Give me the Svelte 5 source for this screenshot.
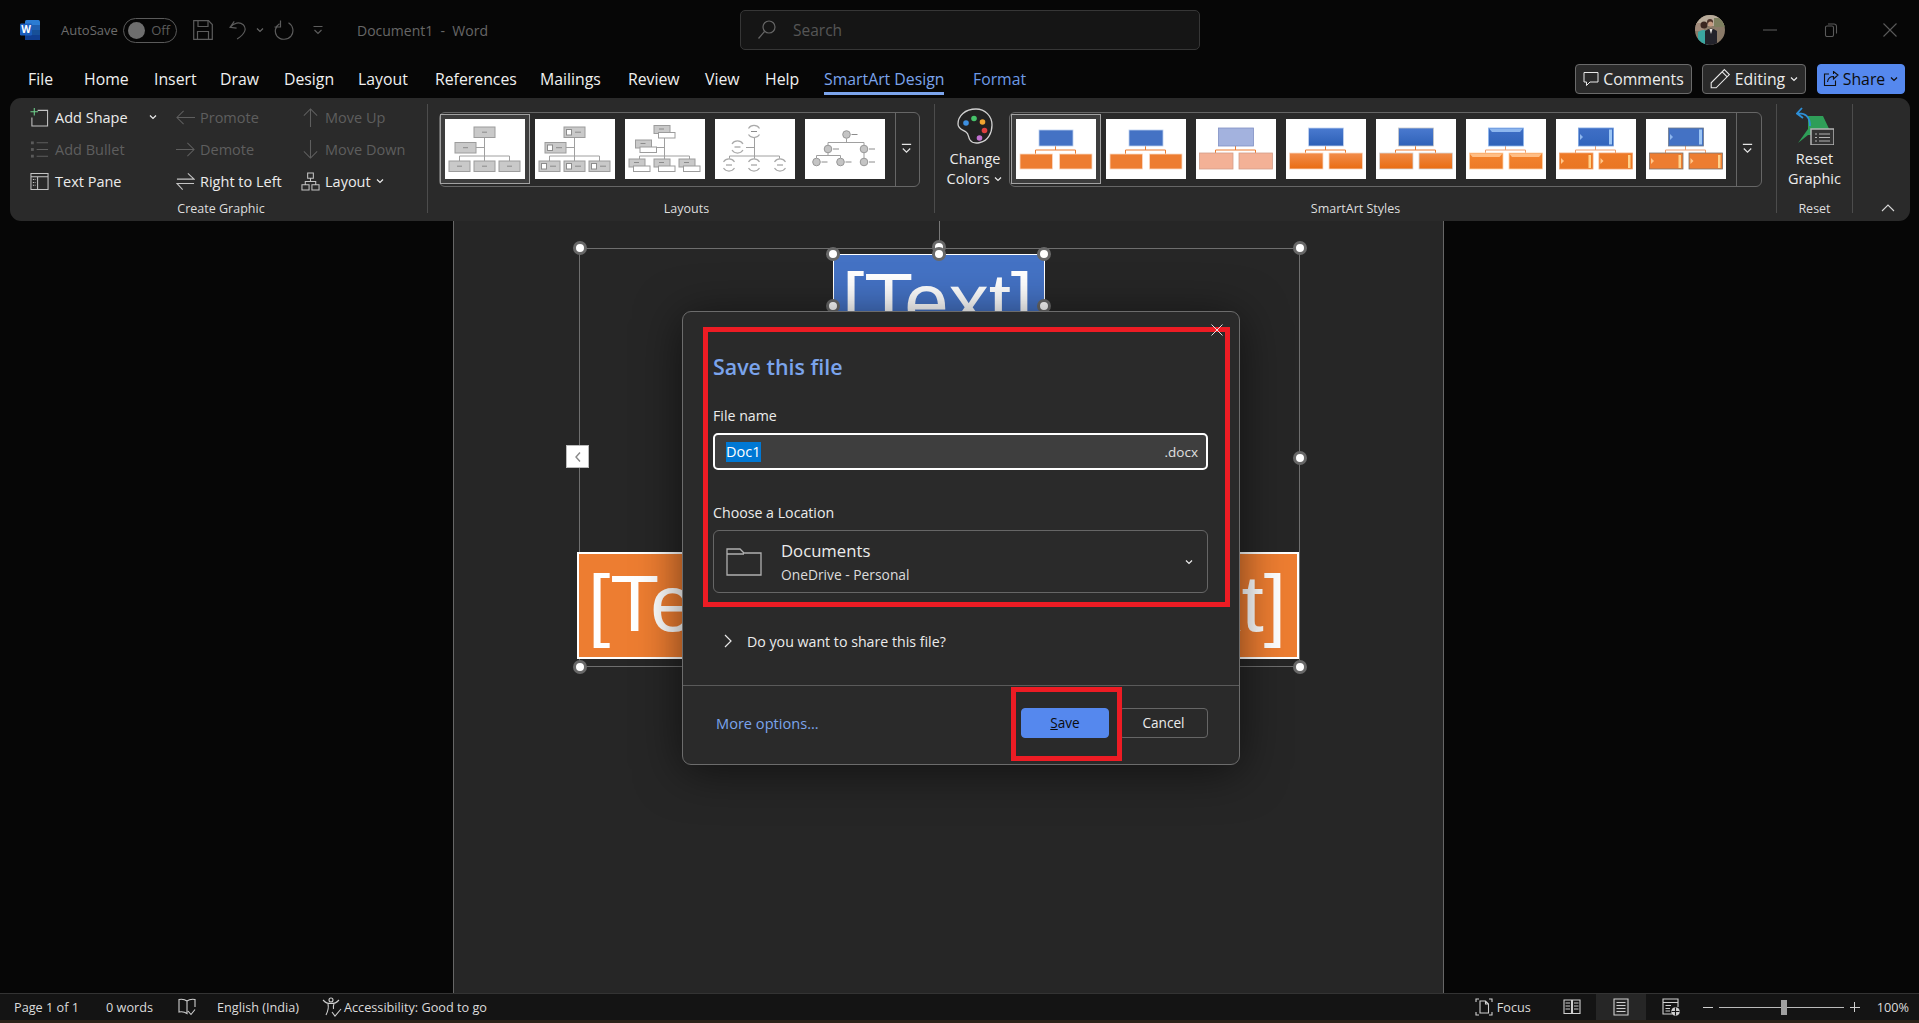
<script>
	const tabs = [
		{ label: 'File', w: 56 },
		{ label: 'Home', w: 70 },
		{ label: 'Insert', w: 66 },
		{ label: 'Draw', w: 64 },
		{ label: 'Design', w: 74 },
		{ label: 'Layout', w: 77 },
		{ label: 'References', w: 105 },
		{ label: 'Mailings', w: 88 },
		{ label: 'Review', w: 77 },
		{ label: 'View', w: 60 },
		{ label: 'Help', w: 59 },
		{ label: 'SmartArt Design', w: 149, active: true },
		{ label: 'Format', w: 70, accent: true }
	];

	// page starts at 453,221 in the window
	const handles = [
		[580, 248], [1300, 248], [580, 667], [1300, 667], [1300, 458],
		[939, 247], [833, 254], [939, 254], [1044, 254], [833, 306], [1044, 306]
	].map(([x, y]) => ({ x: x - 453, y: y - 221 }));

	const orgLines = 'M39.5 18V42M31 28.5H39.5M14.5 42V37H64.5V42';
	const orgBoxes = [
		[29, 8], [10, 23.5], [4, 42], [29, 42], [54, 42]
	];
	const stackBoxes = [
		[29, 6.5], [10.5, 21], [4, 40], [29, 40], [54, 40]
	];
	const rings = [
		[39, 12.5], [22.5, 28], [14, 46], [39, 46], [65, 46]
	];
	const nodes = [
		[41.5, 15.5], [23, 30], [59, 30], [11.5, 43], [35.5, 43], [59, 43]
	];

	const styles = [
		{ top: '#4472c4', low: '#ed7d31', edge: '#bcd0f0', lowEdge: '#fbd9c2', line: '#ed7d31' },
		{ top: '#4472c4', low: '#ed7d31', edge: '#bcd0f0', lowEdge: '#fbd9c2', line: '#ed7d31' },
		{ top: '#a3b2de', low: '#f3b196', edge: '#8090c4', lowEdge: '#d29f8a', line: '#ed7d31', big: true },
		{ top: '#4a7ad0', top2: '#2c5fb6', low: '#f28d4c', low2: '#e96c12', edge: '#c4d4f0', lowEdge: '#fbd9c2', line: '#ed7d31', big: true },
		{ top: '#4a7ad0', top2: '#2f62b8', low: '#f08a45', low2: '#e96c12', edge: '#c9c9c9', lowEdge: '#d6d6d6', line: '#ed7d31', big: true },
		{ top: '#3f6fc6', top2: '#2f62b8', low: '#f4842e', low2: '#ec7a26', edge: '#8db6ee', lowEdge: '#ffd3a6', line: '#f0a070', big: true, cap: true },
		{ top: '#3f6fc6', top2: '#3265bc', low: '#ee7a28', low2: '#e97622', edge: '#7aa2de', lowEdge: '#f2a36e', line: '#f0a070', big: true, side: true },
		{ top: '#4472c4', low: '#ed7d31', edge: '#6f7a8c', lowEdge: '#7d7570', line: '#f0a070', big: true, side: true }
	];
</script>

{#snippet dash(x, y, w = 6)}
	<path d={`M${x} ${y}h${w}`} stroke="#8c8c8c" stroke-width="1" />
{/snippet}

{#snippet layoutThumb(kind)}
	<svg viewBox="0 0 80 60" class="thumb-art">
		<g fill="none" stroke="#a0a0a0" stroke-width="1">
			{#if kind === 5}
				<path d="M41.5 19.5V23.5M23 26V23.5H59V26M23 34V36.5M11.5 39V36.5H35.5V39M59 34V39" />
			{:else}
				<path d={orgLines} />
			{/if}
		</g>
		{#if kind === 1 || kind === 2}
			{#each orgBoxes as [x, y]}
				<rect {x} {y} width="21" height="10.5" fill="#c9c9c9" stroke="#9c9c9c" />
				{#if kind === 2}
					<rect x={x + 2.5} y={y + 2.5} width="5" height="5.5" fill="#fff" stroke="#8c8c8c" />
					{@render dash(x + 11, y + 5.2, 6)}
				{:else}
					{@render dash(x + 8, y + 5.2, 5)}
				{/if}
			{/each}
		{:else if kind === 3}
			{#each stackBoxes as [x, y]}
				<rect {x} {y} width="16" height="8" fill="#c9c9c9" stroke="#9c9c9c" />
				{@render dash(x + 5, y + 3.5, 5)}
				<rect x={x + 4.5} y={y + 7} width="16.5" height="5.5" fill="#fff" stroke="#9c9c9c" />
			{/each}
		{:else if kind === 4}
			{#each rings as [x, y]}
				<circle cx={x} cy={y} r="6.5" fill="#fff" stroke="none" />
				<path d={`M${x - 5.5} ${y - 3}a6.5 6.5 0 0 1 11 0M${x - 5.5} ${y + 3}a6.5 6.5 0 0 0 11 0`} fill="none" stroke="#aaa" stroke-width="1.2" />
				{@render dash(x - 3, y, 6)}
			{/each}
		{:else}
			{#each nodes as [x, y]}
				<circle cx={x} cy={y} r="3.8" fill="#c4c4c4" stroke="#979797" />
				{@render dash(x + 5, y, 6)}
			{/each}
		{/if}
	</svg>
{/snippet}

{#snippet styleThumb(s, i)}
	{@const grow = s.big ? 1 : 0}
	<svg viewBox="0 0 80 60" class="thumb-art">
		<defs>
			<linearGradient id={`t${i}`} x1="0" y1="0" x2="0" y2="1">
				<stop offset="0" stop-color={s.top} />
				<stop offset="1" stop-color={s.top2 || s.top} />
			</linearGradient>
			<linearGradient id={`l${i}`} x1="0" y1="0" x2="0" y2="1">
				<stop offset="0" stop-color={s.low} />
				<stop offset="1" stop-color={s.low2 || s.low} />
			</linearGradient>
		</defs>
		<path
			d={`M39.5 ${27}V31M${19.5} ${35 - grow}V31H59.5V${35 - grow}`}
			fill="none"
			stroke={s.line}
			stroke-width="1"
		/>
		<rect x={23 - grow * 0.5} y={11 - grow * 2} width={34 + grow} height={16 + grow * 2} fill={`url(#t${i})`} stroke={s.edge} stroke-width="0.8" />
		{#each [4, 43.5] as x}
			<rect x={x - grow * 0.5} y={35 - grow} width={32.5 + grow} height={15 + grow} fill={`url(#l${i})`} stroke={s.lowEdge} stroke-width="0.8" />
			{#if s.cap}
				<path d={`M${x - 0.5} 34.5h33l-3 3.5h-27z`} fill="#ffbe85" />
			{/if}
			{#if s.side}
				<rect x={x + 28.5} y="36" width="2.5" height="13" fill="#ffd28a" />
				<path d={`M${x + 1} 39l3 3-3 3z`} fill="#ffc78a" />
			{/if}
		{/each}
		{#if s.cap}
			<path d="M23 9.5h34l-3 3.500h-28z" fill="#8db6ee" />
		{/if}
		{#if s.side}
			<rect x="53" y="10.5" width="3" height="15" fill="#9cc6f5" />
			<path d="M24 15l3 3-3 3z" fill="#8db6ee" />
		{/if}
	</svg>
{/snippet}

{#snippet moreChevron()}
	<svg viewBox="0 0 14 14" class="more"><path d="M2 2.5h10M3 7l4 4 4-4" fill="none" stroke="#e6e6e6" stroke-width="1.2" /></svg>
{/snippet}

{#snippet chevron(cls = 'chev')}
	<svg viewBox="0 0 10 10" class={cls}><path d="M2 3.5l3 3 3-3" fill="none" stroke="currentColor" stroke-width="1.2" /></svg>
{/snippet}

<div class="window">
	<header class="titlebar">
		<div class="title-left">
			<svg viewBox="0 0 20 20" class="word-logo">
				<rect x="5" y="0" width="15" height="20" rx="1.5" fill="#2b7cd3" />
				<rect x="12" y="5" width="8" height="5" fill="#1f5fb0" />
				<rect x="12" y="10" width="8" height="5" fill="#175098" />
				<rect x="5" y="15" width="15" height="5" fill="#103f91" />
				<rect x="0" y="3.5" width="12" height="12" rx="1.2" fill="#1b5ebe" />
				<text x="6" y="13" text-anchor="middle" class="word-w">W</text>
			</svg>
			<span class="autosave">AutoSave</span>
			<span class="toggle"><i></i><span>Off</span></span>
			<svg viewBox="0 0 20 20" class="qat save-ic">
				<path d="M.7 .7H15.500L19.300 4.500V19.300H.7Z" fill="none" />
				<path d="M5 .7V6.500H15V.7M4.500 19.300V11.500H15.500V19.300" fill="none" />
			</svg>
			<svg viewBox="0 0 20 20" class="qat undo-ic">
				<path d="M5.500 1L1 7.200 8 8M1.500 7C5 2.500 11 1 15 4.500 19 8.500 17 14 8.500 19.500" fill="none" />
			</svg>
			<span class="qat-chev">{@render chevron()}</span>
			<svg viewBox="0 0 20 20" class="qat redo-ic">
				<path d="M6.500 .5V7H.5M5.500 3.800C1 6.500 .2 12 2.800 15.800 6 20.200 13.500 20.500 17 16.200 20.500 11.500 19 5.500 14.500 2.800" fill="none" />
			</svg>
			<svg viewBox="0 0 12 12" class="qat custom-ic">
				<path d="M1.500 2.500h9M2.500 6l3.500 3.500L9.500 6" fill="none" />
			</svg>
			<span class="doc-title">Document1&nbsp; -&nbsp; Word</span>
		</div>
		<div class="searchbox">
			<svg viewBox="0 0 18 20" class="search-ic">
				<circle cx="11" cy="7" r="6" fill="none" />
				<path d="M6.500 11.500L.5 18.500" fill="none" />
			</svg>
			<span>Search</span>
		</div>
		<div class="title-right">
			<svg viewBox="0 0 30 30" class="avatar">
				<defs>
					<clipPath id="av"><circle cx="15" cy="15" r="15" /></clipPath>
				</defs>
				<g clip-path="url(#av)">
					<rect width="30" height="30" fill="#8a7a68" />
					<rect width="30" height="11" fill="#b8ab9a" />
					<rect x="0" y="8" width="9" height="8" fill="#a08a7a" />
					<rect x="19" y="3" width="12" height="9" fill="#7d7f5f" />
					<circle cx="9" cy="10" r="3.500" fill="#3a2620" />
					<path d="M3 30V17q6-4 10 0v13z" fill="#3aa6a0" />
					<circle cx="15" cy="7" r="3" fill="#4a3028" />
					<circle cx="15.500" cy="9" r="2.500" fill="#c49a80" />
					<path d="M10 30V16q6-5 12 0v14z" fill="#23232b" />
					<path d="M14.500 14l1.500 5 1.500-5z" fill="#e8e4e0" />
				</g>
			</svg>
			<span class="win-btn"><svg viewBox="0 0 14 14" class="win-ic"><path d="M0 7h14" /></svg></span>
			<span class="win-btn"><svg viewBox="0 0 14 14" class="win-ic"><path d="M1.500 4.500a1.500 1.500 0 0 1 1.500-1.500h5a1.500 1.500 0 0 1 1.500 1.500v7.500a1.500 1.500 0 0 1-1.500 1.500h-5a1.500 1.500 0 0 1-1.500-1.500zM4 1h6a2.500 2.500 0 0 1 2.500 2.500v7" /></svg></span>
			<span class="win-btn"><svg viewBox="0 0 14 14" class="win-ic"><path d="M.5 .5l13 13M13.500 .5l-13 13" /></svg></span>
		</div>
	</header>

	<div class="tabrow">
		<nav class="tabs">
			{#each tabs as tab}
				<span class="tab-cell" style={`width:${tab.w}px`}>
					<span class="tab" class:active={tab.active} class:accent={tab.accent}>{tab.label}</span>
				</span>
			{/each}
		</nav>
		<div class="actions">
			<button class="pill comments">
				<svg viewBox="0 0 16 16" class="pill-ic"><path d="M1 1.500H15V11H7L3.500 14.500V11H1Z" fill="none" stroke="#e8e8e8" /></svg>
				Comments
			</button>
			<button class="pill editing">
				<svg viewBox="0 0 20 20" class="pill-ic big"><path d="M14 1.500l4.500 4.500L6.500 18H2v-4.500zM12 3.500l4.500 4.500" fill="none" stroke="#e8e8e8" /></svg>
				Editing {@render chevron()}
			</button>
			<button class="pill share">
				<svg viewBox="0 0 16 16" class="pill-ic"><path d="M6 3H1.500V14.500H12.500V9.500M4.500 11C5 7.500 7 5.500 10.500 5.500V8L15 4 10.500 .5V3" fill="none" stroke="#111" stroke-width="1.100" /></svg>
				Share {@render chevron()}
			</button>
		</div>
	</div>

	<section class="ribbon">
		<div class="group create">
			<div class="cmds">
				<div class="cmd"><svg viewBox="0 0 20 20" class="ic shift"><path d="M8 2.500H18.500V19H2V10" fill="none" /><path d="M4.500 0V8M.5 4H8.500" fill="none" stroke="#6fd08c" /></svg><span>Add Shape</span>{@render chevron('chev add-chev')}</div>
				<div class="cmd off"><svg viewBox="0 0 20 20" class="ic dim shift"><path d="M7 3h12M7 10h12M7 17h12" fill="none" /><rect x="1" y="1.500" width="3" height="3" fill="#5a5a5a" stroke="none" /><rect x="1" y="8.500" width="3" height="3" fill="#5a5a5a" stroke="none" /><rect x="1" y="15.500" width="3" height="3" fill="#5a5a5a" stroke="none" /></svg><span>Add Bullet</span></div>
				<div class="cmd"><svg viewBox="0 0 20 20" class="ic shift"><path d="M1 1.500H19V18.500H1ZM1 5H19M8 5V18.500" fill="none" /><path d="M3 8h3M3 11h3M3 14h3" fill="none" stroke-dasharray="1.500 1" /></svg><span>Text Pane</span></div>
			</div>
			<div class="cmds">
				<div class="cmd off"><svg viewBox="0 0 20 20" class="ic dim"><path d="M20 10H1M8 3L1 10 8 17" fill="none" /></svg><span>Promote</span></div>
				<div class="cmd off"><svg viewBox="0 0 20 20" class="ic dim"><path d="M0 10H19M12 3L19 10 12 17" fill="none" /></svg><span>Demote</span></div>
				<div class="cmd"><svg viewBox="0 0 20 20" class="ic"><path d="M1 7.500H19L12.500 1.500M19 12H1L7 18.500" fill="none" /></svg><span>Right to Left</span></div>
			</div>
			<div class="cmds">
				<div class="cmd off"><svg viewBox="0 0 20 20" class="ic dim"><path d="M10 21V1M3 8L10 1 17 8" fill="none" /></svg><span>Move Up</span></div>
				<div class="cmd off"><svg viewBox="0 0 20 20" class="ic dim"><path d="M10 -1V19M3 12L10 19 17 12" fill="none" /></svg><span>Move Down</span></div>
				<div class="cmd"><svg viewBox="0 0 20 20" class="ic"><path d="M7 1H13V6.500H7ZM1 13.500H8.500V19H1ZM11.500 13.500H19V19H11.500ZM10 6.500V10M4.500 13.500V10H15.500V13.500" fill="none" /></svg><span>Layout</span>{@render chevron()}</div>
			</div>
			<div class="group-label">Create Graphic</div>
		</div>
		<div class="sep"></div>

		<div class="group layouts">
			<div class="gallery layouts-gal">
				{#each [1, 2, 3, 4, 5] as kind}
					<div class="thumb" class:selected={kind === 1}>{@render layoutThumb(kind)}</div>
				{/each}
				<div class="more-btn">{@render moreChevron()}</div>
			</div>
			<div class="group-label">Layouts</div>
		</div>
		<div class="sep"></div>

		<div class="group styles">
			<div class="styles-row">
				<div class="big-btn change">
					<svg viewBox="0 0 36 36" class="palette">
						<path d="M19 1C8 1 1 8 1 16c0 5 5 6 8 8 3 2 2 5 4 8 2 3 6 3.500 10 2.500C31 33 35 25 35 17 35 8 28 1 19 1Z" fill="#222" stroke="#d0d0d0" stroke-width="1.300" />
						<circle cx="9" cy="15" r="2.800" fill="#3d8fe0" />
						<circle cx="17" cy="10.500" r="2.800" fill="#46c26a" />
						<circle cx="25.500" cy="14" r="2.800" fill="#f0a530" />
						<circle cx="27.500" cy="22.500" r="2.800" fill="#e04040" />
						<circle cx="22.500" cy="30" r="2.800" fill="#c070d0" />
					</svg>
					<span>Change</span>
					<span>Colors {@render chevron()}</span>
				</div>
				<div class="gallery styles-gal">
					{#each styles as s, i}
						<div class="thumb" class:selected={i === 0}>{@render styleThumb(s, i)}</div>
					{/each}
					<div class="more-btn">{@render moreChevron()}</div>
				</div>
			</div>
			<div class="group-label">SmartArt Styles</div>
		</div>
		<div class="sep"></div>

		<div class="group reset">
			<div class="big-btn">
				<svg viewBox="0 0 38 38" class="reset-ic">
					<path d="M12 9H27L36 28H12L2 36 12 22Z" fill="#2f9e58" />
					<rect x="15" y="22" width="23" height="16" fill="#333" stroke="#b4b4b4" stroke-width="1.500" />
					<path d="M19 27h2M23 27h11M19 30.500h2M23 30.500h11M19 34h2M23 34h11" stroke="#b4b4b4" />
					<path d="M6 1L1 6.500 7 11M1.500 6.500C9 6 14 9 14 19" fill="none" stroke="#2d8fd8" stroke-width="1.800" />
				</svg>
				<span>Reset</span>
				<span>Graphic</span>
			</div>
			<div class="group-label">Reset</div>
		</div>
		<div class="sep"></div>
		<div class="collapse">
			<svg viewBox="0 0 14 8"><path d="M1 7l6-6 6 6" fill="none" stroke="#d8d8d8" stroke-width="1.100" /></svg>
		</div>
	</section>

	<main class="workspace">
		<div class="page">
			<div class="rotate-line"></div>
			<div class="frame">
				<div class="node top">[Text]</div>
				<div class="low-row">
					<div class="node low left">[Text]</div>
					<div class="node low right">[Text]</div>
				</div>
				<div class="expander">
					<svg viewBox="0 0 8 12"><path d="M6 1.500L2 6l4 4.500" fill="none" stroke="#888" stroke-width="1.400" /></svg>
				</div>
			</div>
			{#each handles as h}
				<i class="handle" style={`left:${h.x}px;top:${h.y}px`}></i>
			{/each}

			<div class="dialog">
				<div class="redbox">
					<h2>Save this file</h2>
					<div class="field-label first">File name</div>
					<div class="filename">
						<span class="sel-text">Doc1</span>
						<span class="ext">.docx</span>
					</div>
					<div class="field-label second">Choose a Location</div>
					<div class="location">
						<svg viewBox="0 0 36 28" class="folder">
							<path d="M1 27V1H14L18 5H35V27ZM1 6H18" fill="none" stroke="#b0b0b0" stroke-width="1.300" />
						</svg>
						<div class="loc-text">
							<span class="loc-main">Documents</span>
							<span class="loc-sub">OneDrive - Personal</span>
						</div>
						{@render chevron('chev loc-chev')}
					</div>
				</div>
				<svg viewBox="0 0 12 12" class="dialog-x"><path d="M.5 .5l11 11M11.500 .5l-11 11" stroke="#e0e0e0" stroke-width="1" /></svg>
				<div class="share-row">
					<svg viewBox="0 0 8 14" class="share-chev"><path d="M1 1l6 6-6 6" fill="none" stroke="#e8e8e8" stroke-width="1.200" /></svg>
					<span>Do you want to share this file?</span>
				</div>
				<div class="footer">
					<span class="more-options">More options...</span>
					<div class="buttons">
						<button class="save-btn"><u>S</u>ave</button>
						<button class="cancel-btn">Cancel</button>
						<div class="redbox-btn"></div>
					</div>
				</div>
			</div>
		</div>
	</main>

	<footer class="status">
		<div class="status-left">
			<span class="s-page">Page 1 of 1</span>
			<span class="s-words">0 words</span>
			<svg viewBox="0 0 18 18" class="s-ic book"><path d="M9 3C7 1.500 4 1 1 1.500V14C4 13.500 7 14 9 15.500V3ZM9 3C11 1.500 14 1 17 1.500V9M10 13l3 3.500 4-5" fill="none" /></svg>
			<span class="s-lang">English (India)</span>
			<svg viewBox="0 0 20 20" class="s-ic acc"><circle cx="9" cy="3" r="2" fill="none" /><path d="M1 3c3 3 4 3.500 8 3.500S14 6 17 3M6 7c1 4 0 7-2 11M12 7c-1 2-1 3-.5 5M10 15l3 4 6-7" fill="none" /></svg>
			<span class="s-acc">Accessibility: Good to go</span>
		</div>
		<div class="status-right">
			<svg viewBox="0 0 18 18" class="s-ic focus"><path d="M1 4V1H4M14 1H17V4M1 14V17H4M14 17H17V14" fill="none" /><path d="M5 3H10.500L13.500 6V15H5ZM10.500 3V6H13.500" fill="none" /></svg>
			<span class="s-focus">Focus</span>
			<svg viewBox="0 0 18 18" class="s-ic read"><path d="M1 2H8.500V15.500H1ZM9.500 2H17V15.500H9.500ZM2.500 5H7M2.500 8H7M2.500 11H7M11 5H15.500M11 8H15.500M11 11H15.500" fill="none" /></svg>
			<span class="view-active">
				<svg viewBox="0 0 16 18" class="s-ic print"><path d="M1 1H15V17H1ZM3.500 4.500H12.500M3.500 7.500H12.500M3.500 10.500H12.500M3.500 13.500H12.500" fill="none" /></svg>
			</span>
			<svg viewBox="0 0 18 18" class="s-ic web"><path d="M10 16H1V1H16V9M1 4.500H16M3.500 7.500H9M3.500 10.500H8M3.500 13H8" fill="none" /><circle cx="13.500" cy="13.500" r="4.300" fill="#d0d0d0" stroke="none" /><path d="M9.500 13.500h8M13.500 9.500v8" stroke="#141414" fill="none" /></svg>
			<span class="zoom-minus"></span>
			<div class="slider"><span class="thumb-knob"></span></div>
			<span class="zoom-plus"></span>
			<span class="s-zoom">100%</span>
		</div>
	</footer>
	<div class="taskbar-edge"></div>
</div>

<style>
	:global(body) {
		margin: 0;
		background: #060606;
		overflow: hidden;
	}

	.window {
		display: flex;
		flex-direction: column;
		width: 1919px;
		height: 1023px;
		background: #060606;
		color: #ececec;
		font-family: 'Open Sans', 'Noto Sans', sans-serif;
		font-size: 14.5px;
		overflow: hidden;
	}

	/* title bar */
	.titlebar {
		display: grid;
		grid-template-columns: 740px 460px 1fr;
		align-items: center;
		height: 60px;
		flex: none;
	}

	.title-left {
		display: flex;
		align-items: center;
		padding: 0 0 0 20px;
	}

	.word-logo {
		width: 20px;
		height: 20px;
		flex: none;
	}

	.word-w {
		fill: #fff;
		font-size: 10px;
		font-weight: 700;
		font-family: 'Open Sans', sans-serif;
	}

	.autosave {
		margin-left: 21px;
		color: #6c6c6c;
		font-size: 13px;
		width: 62px;
	}

	.toggle {
		display: flex;
		align-items: center;
		justify-content: space-between;
		box-sizing: border-box;
		width: 54px;
		height: 25px;
		padding: 0 6px 0 4px;
		border: 1px solid #5a5a5a;
		border-radius: 13px;
		color: #5c5c5c;
		font-size: 13px;
	}

	.toggle i {
		width: 17px;
		height: 17px;
		border-radius: 50%;
		background: #6e6e6e;
	}

	.qat {
		flex: none;
		stroke: #5c5c5c;
		stroke-width: 1.200;
	}

	.save-ic {
		width: 20px;
		height: 20px;
		margin-left: 16px;
	}

	.undo-ic {
		width: 19px;
		height: 20px;
		margin-left: 16px;
	}

	.qat-chev {
		display: flex;
		margin-left: 7px;
		color: #666;
	}

	.redo-ic {
		width: 20px;
		height: 20px;
		margin-left: 9px;
	}

	.custom-ic {
		width: 12px;
		height: 12px;
		margin-left: 18px;
	}

	.doc-title {
		margin-left: 33px;
		color: #676767;
		font-size: 14px;
		white-space: nowrap;
	}

	.searchbox {
		display: flex;
		align-items: center;
		box-sizing: border-box;
		height: 40px;
		padding-left: 17px;
		background: #151515;
		border: 1px solid #363636;
		border-radius: 5px;
		color: #565656;
		font-size: 15.5px;
	}

	.search-ic {
		width: 18px;
		height: 20px;
		margin-right: 17px;
		stroke: #666;
		stroke-width: 1.200;
	}

	.title-right {
		display: flex;
		align-items: center;
		padding-left: 495px;
	}

	.avatar {
		width: 30px;
		height: 30px;
		flex: none;
	}

	.win-btn {
		display: flex;
		width: 14px;
		height: 14px;
		margin-left: 40px;
	}

	.win-btn:nth-of-type(1) {
		margin-left: 38px;
	}

	.win-btn:nth-of-type(2) {
		margin-left: 47px;
	}

	.win-btn:nth-of-type(3) {
		margin-left: 45px;
	}

	.win-ic {
		width: 14px;
		height: 14px;
		fill: none;
		stroke: #5a5a5a;
		stroke-width: 1.100;
	}

	/* tab row */
	.tabrow {
		display: flex;
		height: 38px;
		flex: none;
		padding-left: 28px;
	}

	.tabs {
		display: flex;
		align-items: flex-start;
	}

	.tab-cell {
		display: block;
	}

	.tab {
		display: inline-block;
		box-sizing: border-box;
		height: 35px;
		padding-top: 9px;
		line-height: 20px;
		color: #f0f0f0;
		font-size: 15.8px;
		white-space: nowrap;
	}

	.tab.active {
		color: #7ba4ec;
		border-bottom: 3px solid #7ba4ec;
		font-weight: 500;
	}

	.tab.accent {
		color: #6d9ae6;
	}

	.actions {
		display: flex;
		margin-left: auto;
		padding: 4px 14px 0 0;
	}

	.pill {
		display: flex;
		align-items: center;
		justify-content: center;
		gap: 4px;
		box-sizing: border-box;
		height: 30px;
		padding: 0;
		background: #2a2a2a;
		border: 1px solid #6a6a6a;
		border-radius: 4px;
		color: #ececec;
		font: inherit;
		font-size: 15.8px;
	}

	.comments {
		width: 117px;
	}

	.editing {
		width: 104px;
		margin-left: 10px;
	}

	.share {
		width: 88px;
		margin-left: 11px;
		background: #5588ee;
		border-color: #5588ee;
		color: #0c0c0c;
	}

	.pill-ic {
		width: 16px;
		height: 16px;
		flex: none;
	}

	.pill-ic.big {
		width: 22px;
		height: 22px;
	}

	.chev {
		width: 10px;
		height: 10px;
		flex: none;
	}

	/* ribbon */
	.ribbon {
		display: flex;
		flex: none;
		box-sizing: border-box;
		width: 1900px;
		height: 123px;
		margin-left: 10px;
		background: #2a2a2a;
		border-radius: 11px;
		font-size: 14.5px;
		position: relative;
		z-index: 2;
	}

	.sep {
		flex: none;
		width: 1px;
		height: 109px;
		margin-top: 6px;
		background: #4c4c4c;
	}

	.group {
		display: flex;
		flex-direction: column;
		flex: none;
		height: 123px;
		box-sizing: border-box;
	}

	.group-label {
		height: 22px;
		margin-top: auto;
		margin-bottom: 1px;
		line-height: 22px;
		text-align: center;
		font-size: 12.5px;
		color: #dedede;
	}

	.create {
		display: grid;
		grid-template-columns: 145px 125px 1fr;
		grid-template-rows: 96px 1fr;
		width: 417px;
		padding: 3px 0 0 21px;
	}

	.create .group-label {
		grid-column: 1 / 4;
		padding-left: 0;
		margin-right: 16px;
	}

	.cmds {
		display: flex;
		flex-direction: column;
	}

	.cmd {
		display: flex;
		align-items: center;
		height: 32px;
		color: #ececec;
		white-space: nowrap;
	}

	.cmd.off {
		color: #5e5e5e;
	}

	.cmd span {
		margin-right: 4px;
	}

	.ic {
		flex: none;
		width: 19px;
		height: 19px;
		margin-right: 5px;
		stroke: #c4c4c4;
		stroke-width: 1.100;
	}

	.ic.shift {
		margin-left: -1px;
		margin-right: 6px;
	}

	.ic.dim {
		stroke: #5e5e5e;
	}

	.add-chev {
		margin-left: 16px;
	}

	.layouts {
		width: 506px;
		padding: 14px 0 0 11px;
	}

	.gallery {
		display: flex;
		align-items: flex-start;
		box-sizing: border-box;
		height: 75px;
		padding: 6px 0 0 5px;
		gap: 10px;
		border: 1px solid #666;
		border-radius: 6px;
	}

	.layouts-gal {
		width: 481px;
	}

	.styles-gal {
		width: 753px;
		padding-left: 6px;
	}

	.thumb {
		flex: none;
		width: 80px;
		height: 60px;
		background: #fff;
	}

	.thumb.selected {
		box-shadow: 0 0 0 4px #3d3d3d, 0 0 0 5px #a2a2a2;
	}

	.thumb-art {
		display: block;
		width: 80px;
		height: 60px;
	}

	.more-btn {
		display: flex;
		align-items: center;
		justify-content: center;
		align-self: stretch;
		box-sizing: border-box;
		width: 29px;
		margin: -6px 0 0 auto;
		padding: 0 3px 3px 0;
		border-left: 1px solid #666;
	}

	.more {
		width: 13px;
		height: 13px;
	}

	.styles {
		width: 841px;
		padding-top: 10px;
	}

	.styles-row {
		display: flex;
		align-items: flex-start;
	}

	.styles-gal {
		margin-top: 4px;
	}

	.big-btn {
		display: flex;
		flex-direction: column;
		align-items: center;
		line-height: 20px;
		color: #ececec;
		white-space: nowrap;
	}

	.change {
		width: 62px;
		margin: 0 3px 0 9px;
	}

	.palette {
		width: 36px;
		height: 36px;
		margin-bottom: 5px;
	}

	.reset {
		width: 75px;
		padding-top: 9px;
	}

	.reset-ic {
		width: 38px;
		height: 38px;
		margin-bottom: 4px;
	}

	.collapse {
		display: flex;
		flex: 1;
		justify-content: flex-end;
		padding: 106px 15px 0 0;
		box-sizing: border-box;
	}

	.collapse svg {
		width: 14px;
		height: 8px;
	}

	/* document */
	.workspace {
		flex: 1;
		min-height: 0;
		padding-left: 453px;
	}

	.page {
		position: relative;
		box-sizing: border-box;
		width: 991px;
		height: 100%;
		background: #262626;
		border-left: 1px solid #666;
		border-right: 1px solid #666;
	}

	.rotate-line {
		position: absolute;
		left: 485px;
		top: 0;
		width: 1px;
		height: 24px;
		background: #777;
	}

	.frame {
		position: absolute;
		left: 125px;
		top: 27px;
		box-sizing: border-box;
		width: 721px;
		height: 419px;
		border: 1px solid #6e6e6e;
	}

	.node {
		color: #fff;
		font-family: 'Liberation Sans', Arial, sans-serif;
		font-size: 80px;
		line-height: 1;
		overflow: hidden;
	}

	.node.top {
		position: absolute;
		left: 253px;
		top: 5px;
		box-sizing: border-box;
		width: 212px;
		height: 110px;
		padding-top: 7px;
		padding-right: 3px;
		background: #4472c4;
		border: 1px solid #fff;
		text-align: center;
	}

	.low-row {
		position: absolute;
		left: -3px;
		top: 303px;
		display: flex;
		justify-content: space-between;
		width: 722px;
	}

	.node.low {
		box-sizing: border-box;
		width: 330px;
		height: 107px;
		padding-top: 10px;
		background: #ed7d31;
		border: 2px solid #fff;
	}

	.node.left {
		padding-left: 9px;
	}

	.node.right {
		padding-right: 11px;
		text-align: right;
	}

	.expander {
		position: absolute;
		left: -14px;
		top: 196px;
		display: flex;
		align-items: center;
		justify-content: center;
		width: 23px;
		height: 23px;
		box-sizing: border-box;
		background: #fff;
		border: 1px solid #bbb;
	}

	.expander svg {
		width: 8px;
		height: 12px;
	}

	.handle {
		position: absolute;
		box-sizing: border-box;
		width: 14px;
		height: 14px;
		margin: -7px 0 0 -8px;
		background: #fff;
		border: 3px solid #686868;
		border-radius: 50%;
	}

	/* dialog */
	.dialog {
		position: absolute;
		left: 228px;
		top: 90px;
		box-sizing: border-box;
		width: 558px;
		height: 454px;
		background: #2a2a2a;
		border: 1px solid #6c6c6c;
		border-radius: 9px;
		box-shadow: 0 6px 46px rgba(0, 0, 0, 0.55);
		z-index: 3;
	}

	.redbox {
		box-sizing: border-box;
		width: 527px;
		height: 280px;
		margin: 15px 0 0 20px;
		padding: 21px 17px 0 5px;
		border: 5px solid #ed1c24;
	}

	h2 {
		margin: 0;
		height: 28px;
		line-height: 28px;
		font-size: 21.4px;
		font-weight: 600;
		color: #7ba4ec;
	}

	.field-label {
		height: 20px;
		line-height: 20px;
		font-size: 14.2px;
		color: #ececec;
	}

	.field-label.first {
		margin-top: 25px;
	}

	.field-label.second {
		margin-top: 33px;
	}

	.filename {
		display: flex;
		align-items: center;
		justify-content: space-between;
		box-sizing: border-box;
		height: 37px;
		margin-top: 7px;
		padding: 0 8px 0 11px;
		background: #3e3e3e;
		border: 2px solid #fff;
		border-radius: 5px;
		font-size: 14.5px;
	}

	.sel-text {
		padding: 0 1px 0 0;
		line-height: 20px;
		background: #0078d4;
		color: #fff;
	}

	.ext {
		font-size: 13.5px;
		color: #e0e0e0;
	}

	.location {
		display: flex;
		align-items: center;
		box-sizing: border-box;
		height: 63px;
		margin-top: 7px;
		padding: 0 13px 0 12px;
		border: 1px solid #666;
		border-radius: 6px;
	}

	.folder {
		width: 36px;
		height: 28px;
		flex: none;
	}

	.loc-text {
		display: flex;
		flex-direction: column;
		margin-left: 19px;
		padding-top: 2px;
	}

	.loc-main {
		font-size: 16.7px;
		line-height: 24px;
	}

	.loc-sub {
		font-size: 13.8px;
		line-height: 24px;
		color: #dcdcdc;
	}

	.loc-chev {
		margin-left: auto;
	}

	.dialog-x {
		position: absolute;
		left: 528px;
		top: 12px;
		width: 12px;
		height: 12px;
	}

	.share-row {
		display: flex;
		align-items: center;
		height: 24px;
		margin-top: 22px;
		padding-left: 41px;
		font-size: 14.2px;
		font-weight: 500;
	}

	.share-chev {
		width: 8px;
		height: 14px;
		margin-right: 15px;
	}

	.footer {
		position: relative;
		display: flex;
		align-items: center;
		box-sizing: border-box;
		height: 77px;
		margin-top: 32px;
		padding: 0 31px 3px 33px;
		border-top: 1px solid #5a5a5a;
	}

	.more-options {
		color: #7ba4ec;
		font-size: 14.6px;
		font-weight: 500;
	}

	.buttons {
		position: relative;
		display: flex;
		gap: 10px;
		margin-left: auto;
	}

	.buttons button {
		box-sizing: border-box;
		height: 30px;
		padding: 0;
		border-radius: 4px;
		font: inherit;
		font-size: 13.6px;
	}

	.save-btn {
		width: 88px;
		background: #5588ee;
		border: 1px solid #5588ee;
		color: #0c0c0c;
	}

	.cancel-btn {
		width: 89px;
		background: transparent;
		border: 1px solid #666;
		color: #ececec;
	}

	.redbox-btn {
		position: absolute;
		left: -10px;
		top: -21px;
		box-sizing: border-box;
		width: 111px;
		height: 74px;
		border: 5px solid #ed1c24;
	}

	/* status bar */
	.status {
		display: flex;
		align-items: center;
		justify-content: space-between;
		flex: none;
		box-sizing: border-box;
		height: 27px;
		background: #141414;
		border-top: 1px solid #333;
		font-size: 12.7px;
		color: #dcdcdc;
	}

	.status-left,
	.status-right {
		display: flex;
		align-items: center;
		height: 100%;
	}

	.s-page {
		margin-left: 14px;
		width: 92px;
	}

	.s-words {
		width: 72px;
	}

	.s-ic {
		flex: none;
		width: 18px;
		height: 18px;
		stroke: #cfcfcf;
		stroke-width: 1.100;
	}

	.s-lang {
		margin-left: 21px;
		width: 105px;
	}

	.s-acc {
		margin-left: 2px;
	}

	.acc {
		width: 20px;
		height: 20px;
	}

	.status-right {
		padding-right: 10px;
	}

	.focus {
		margin-left: 0;
	}

	.s-focus {
		margin-left: 4px;
		width: 66px;
	}

	.view-active {
		display: flex;
		align-items: center;
		justify-content: center;
		width: 50px;
		height: 100%;
		margin-left: 15px;
		background: #262626;
	}

	.print {
		width: 16px;
	}

	.web {
		margin-left: 16px;
	}

	.zoom-minus,
	.zoom-plus {
		position: relative;
		width: 10px;
		height: 1px;
		background: #cfcfcf;
	}

	.zoom-minus {
		margin-left: 23px;
	}

	.zoom-plus::after {
		content: '';
		position: absolute;
		left: 4.5px;
		top: -4.5px;
		width: 1px;
		height: 10px;
		background: #cfcfcf;
	}

	.slider {
		position: relative;
		width: 125px;
		height: 1px;
		margin: 0 6px;
		background: #bbb;
	}

	.thumb-knob {
		position: absolute;
		left: 62px;
		top: -7px;
		width: 6px;
		height: 15px;
		background: #a0a0a0;
	}

	.s-zoom {
		margin-left: 17px;
	}

	.taskbar-edge {
		flex: none;
		height: 3px;
		background: #2a2118;
	}
</style>
